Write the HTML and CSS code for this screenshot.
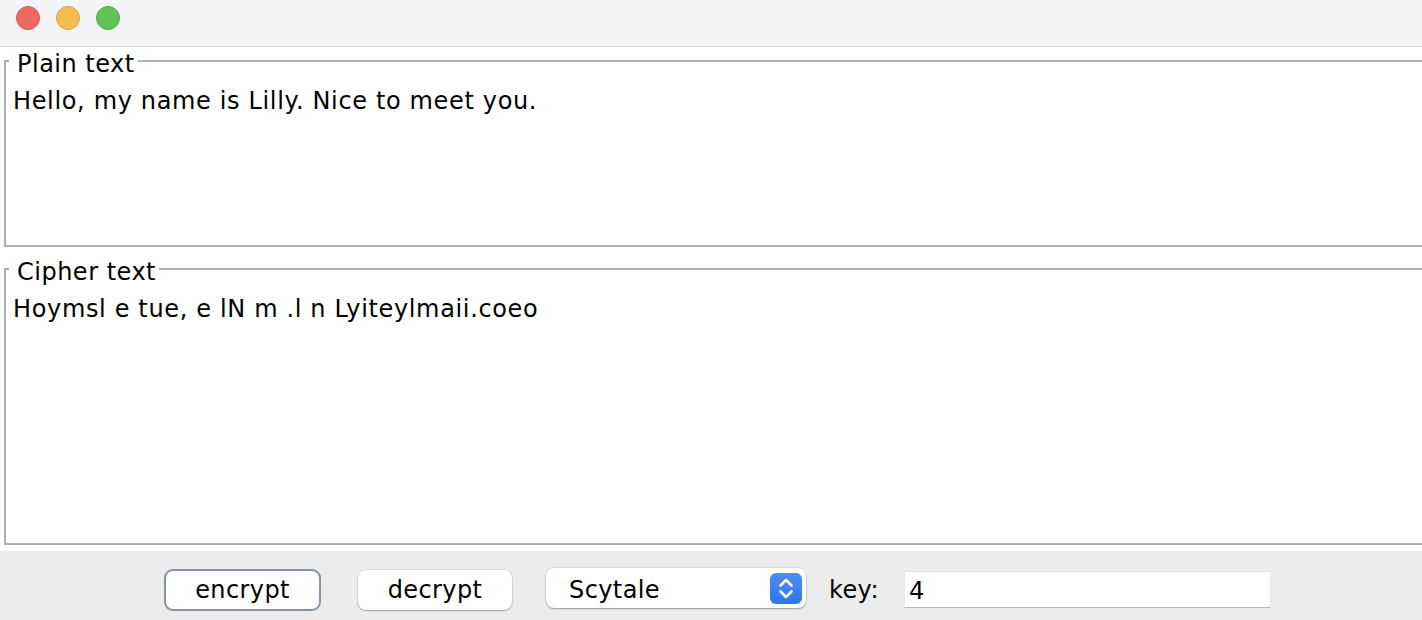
FILE: index.html
```html
<!DOCTYPE html>
<html lang="en">
<head>
<meta charset="utf-8">
<title>Cipher</title>
<link rel="stylesheet" href="styles.css">
</head>
<body>
<div class="window">
  <div class="titlebar">
    <span class="light red"></span>
    <span class="light yellow"></span>
    <span class="light green"></span>
  </div>
  <div class="main">
    <fieldset class="box box-plain">
      <legend>Plain text</legend>
      <div class="content">Hello, my name is Lilly. Nice to meet you.</div>
    </fieldset>
    <fieldset class="box box-cipher">
      <legend>Cipher text</legend>
      <div class="content">Hoymsl e tue, e lN m .l n Lyiteylmaii.coeo</div>
    </fieldset>
  </div>
  <div class="controls">
    <button class="btn btn-default" type="button">encrypt</button>
    <button class="btn btn-plain" type="button">decrypt</button>
    <div class="select">
      <span class="select-label">Scytale</span>
      <span class="stepper">
        <svg width="32" height="31" viewBox="0 0 32 31">
          <path d="M10.5 12.5 L16 7 L21.5 12.5" fill="none" stroke="#fff" stroke-width="2.6" stroke-linecap="round" stroke-linejoin="round"/>
          <path d="M10.5 18.5 L16 24 L21.5 18.5" fill="none" stroke="#fff" stroke-width="2.6" stroke-linecap="round" stroke-linejoin="round"/>
        </svg>
      </span>
    </div>
    <span class="key-label">key:</span>
    <div class="key-input">4</div>
  </div>
</div>
</body>
</html>
```

FILE: styles.css
```css
html, body {
  margin: 0;
  padding: 0;
}
body {
  width: 1422px;
  height: 620px;
  overflow: hidden;
  background: #ffffff;
  font-family: "DejaVu Sans", "Liberation Sans", sans-serif;
  font-size: 24px;
  letter-spacing: 0.4px;
  color: #000;
}
.window {
  display: flex;
  flex-direction: column;
  height: 620px;
  overflow: hidden;
}
.titlebar {
  height: 46px;
  flex: none;
  background: #f3f4f6;
  border-bottom: 1px solid #dcdcdd;
  display: flex;
  align-items: center;
  padding-left: 16px;
  gap: 16px;
  box-sizing: content-box;
}
.light {
  width: 24px;
  height: 24px;
  border-radius: 50%;
  box-sizing: border-box;
  margin-top: -10px;
}
.red { background: #ee6a5f; border: 1px solid #d9574d; }
.yellow { background: #f5bd4f; border: 1px solid #dea23b; }
.green { background: #61c454; border: 1px solid #4fae43; }

.main {
  flex: none;
  background: #ffffff;
  padding: 1px 0 6px 0;
  display: flex;
  flex-direction: column;
}
.box {
  margin: 0 -30px 0 4px;
  border: 2px solid #afafaf;
  padding: 13px 5px 0 7px;
  box-sizing: border-box;
  min-width: 0;
}
.box-plain { height: 199px; }
.box-cipher { height: 289px; margin-top: 9px; }
.box legend {
  margin-left: -4px;
  padding: 6px 3px 0 8px;
  line-height: 20px;
  letter-spacing: 0.5px;
}
.content {
  line-height: 28px;
  white-space: pre;
  letter-spacing: 0.65px;
}

.controls {
  flex: 1;
  background: #ececec;
  display: flex;
  align-items: flex-start;
  padding: 0 0 0 164px;
}
.btn {
  font-family: inherit;
  font-size: 24px;
  letter-spacing: 0.4px;
  color: #000;
  background: #fff;
  margin: 0;
  padding: 0;
  line-height: 26px;
  box-sizing: border-box;
  cursor: default;
}
.btn-default {
  width: 157px;
  height: 42px;
  margin-top: 18px;
  border: 2px solid #8592a7;
  border-radius: 9px;
}
.btn-plain {
  width: 154px;
  height: 40px;
  margin-top: 19px;
  margin-left: 37px;
  border: none;
  border-radius: 8px;
  box-shadow: 0 0 0 0.5px rgba(0,0,0,0.12), 0 1px 1.5px rgba(0,0,0,0.3);
}
.select {
  width: 260px;
  height: 40px;
  margin-top: 17px;
  margin-left: 34px;
  background: #fff;
  border-radius: 8px;
  box-shadow: 0 0 0 0.5px rgba(0,0,0,0.12), 0 1px 1.5px rgba(0,0,0,0.3);
  display: flex;
  align-items: center;
  justify-content: space-between;
  padding: 0 4px 0 23px;
  box-sizing: border-box;
}
.select-label {
  line-height: 26px;
  padding-top: 4px;
}
.stepper {
  width: 32px;
  height: 31px;
  border-radius: 6px;
  background: linear-gradient(#4c8ff8, #2f73ee);
  display: flex;
}
.key-label {
  margin-left: 23px;
  margin-top: 25px;
  line-height: 28px;
}
.key-input {
  width: 367px;
  height: 37px;
  margin-top: 20px;
  margin-left: 25px;
  background: #fff;
  box-sizing: border-box;
  border-top: 1px solid #e4e4e4;
  border-left: 1px solid #e8e8e8;
  border-right: 1px solid #e8e8e8;
  border-bottom: 1px solid #b9b9b9;
  padding: 5px 0 0 4px;
  line-height: 28px;
}
```
